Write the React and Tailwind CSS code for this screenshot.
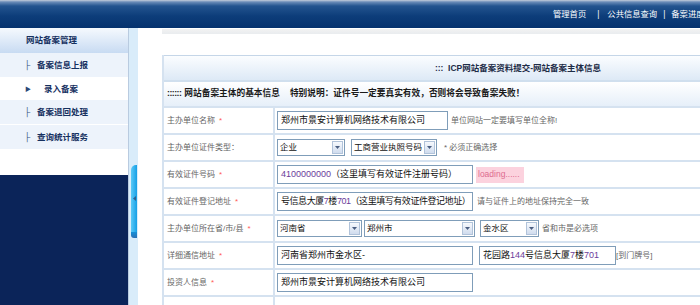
import React from "react";

function Digits({ text }) {
  const parts = text.split(/(\d+)/);
  return (
    <>
      {parts.map((p, i) =>
        /^\d+$/.test(p) ? (
          <span key={i} className="text-[#6a3d9a]">{p}</span>
        ) : (
          <span key={i}>{p}</span>
        )
      )}
    </>
  );
}

function Field({ w, text, tight }) {
  return (
    <div
      className={`${w} h-[19px] shrink-0 flex items-center border border-[#7f9db9] bg-white px-[3px] overflow-hidden whitespace-nowrap text-[9px] text-[#111] ${tight ? "tracking-[-0.45px]" : ""}`}
    >
      <span className="shrink-0">
        <Digits text={text} />
      </span>
    </div>
  );
}

function Select({ w, text }) {
  return (
    <div className={`${w} h-[17px] shrink-0 flex items-center border border-[#7f9db9] bg-white`}>
      <span className="flex-1 min-w-0 pl-[2px] text-[8.5px] text-[#111] whitespace-nowrap overflow-hidden">{text}</span>
      <span className="w-[11px] h-[13px] mr-[1px] shrink-0 flex items-center justify-center border border-[#b1c3da] bg-[linear-gradient(to_bottom,#f6f9fd,#d0dcee)]">
        <svg width="5" height="3" viewBox="0 0 5 3">
          <path d="M0 0h5L2.5 3z" fill="#4a5e82" />
        </svg>
      </span>
    </div>
  );
}

function Hint({ children, className = "" }) {
  return <span className={`text-[8px] text-[#666] whitespace-nowrap ${className}`}>{children}</span>;
}

function Row({ label, star = true, children }) {
  return (
    <div className="h-[27px] shrink-0 flex border-b-2 border-[#d5e2f0]">
      <div className="w-[111px] shrink-0 flex items-center pl-[3px] border-r-2 border-[#d5e2f0] text-[8px] text-[#666] whitespace-nowrap">
        {label}
        {star && <span className="ml-[4px] text-[#ff5a5a]">*</span>}
      </div>
      <div className="flex-1 flex items-center pl-[2px]">{children}</div>
    </div>
  );
}

function SideItem({ children, bg = "bg-[#edf3fb]" }) {
  return (
    <div className={`h-[25px] shrink-0 flex items-center pl-[24px] ${bg} border-b border-white text-[8.5px] font-bold text-[#15305f] whitespace-nowrap`}>
      <span className="font-normal text-[#34507a]">├</span>
      <span className="ml-[7px]">{children}</span>
    </div>
  );
}

export default function App() {
  return (
    <div className="w-[700px] h-[305px] overflow-hidden flex flex-col bg-white font-['Liberation_Sans','Noto_Sans_CJK_SC',sans-serif]">
      <header className="h-[28px] shrink-0 flex items-center pl-[553px] whitespace-nowrap overflow-hidden text-white text-[8.3px] bg-[linear-gradient(to_bottom,#c5cedb_0px,#6a8cb8_2px,#23548f_6px,#0d3d7a_16px,#05326e_28px)]">
        <span>管理首页</span>
        <span className="ml-[11px] mr-[8px]">|</span>
        <span>公共信息查询</span>
        <span className="ml-[6px] mr-[6px]">|</span>
        <span>备案进度查询</span>
      </header>
      <div className="flex flex-1 min-h-0">
        <aside className="w-[128px] shrink-0 flex flex-col">
          <div className="h-[25px] shrink-0 flex items-center pl-[26px] font-bold text-[8.5px] text-[#15305f] bg-[linear-gradient(to_bottom,#f5f9fe,#c8dbf2)]">
            网站备案管理
          </div>
          <SideItem>备案信息上报</SideItem>
          <div className="h-[22px] shrink-0 flex items-center pl-[25px] bg-white text-[8.5px] text-[#15305f] font-semibold whitespace-nowrap">
            <span className="text-[6px] text-[#2b4775]">▶</span>
            <span className="ml-[13px]">录入备案</span>
          </div>
          <SideItem>备案退回处理</SideItem>
          <SideItem>查询统计服务</SideItem>
          <div className="h-[25px] shrink-0 bg-white" />
          <div className="flex-1 bg-[#0b2459]" />
        </aside>
        <div className="w-[10px] shrink-0 flex flex-col border-l border-[#b9cbe0] bg-[#d9ecfa] pt-[137px] pl-[2px] pr-[1px]">
          <div className="h-[67px] rounded-tl-[5px] bg-[linear-gradient(to_right,#5ccaf7,#169fe6)] flex items-center justify-center">
            <svg width="3" height="5" viewBox="0 0 3 5">
              <path d="M3 0v5L0 2.5z" fill="#2d5f8f" />
            </svg>
          </div>
          <div className="h-[6px] bg-[linear-gradient(to_bottom,#1590d8,#2a6fb5)] rounded-bl-[3px]" />
        </div>
        <main className="flex-1 min-w-0 flex flex-col pl-[24px] overflow-hidden">
          <div className="h-[5px] mt-[1px] shrink-0 bg-[linear-gradient(to_bottom,#f2f2f2,#e9ecef)]" />
          <div className="mt-[21px] w-[710px] shrink-0 flex flex-col border-l-2 border-[#d5e2f0]">
            <div className="h-[27px] shrink-0 flex items-center justify-center border-t border-b-2 border-t-[#c5d6e8] border-b-[#d0dfee] bg-[linear-gradient(to_bottom,#fbfdff,#dde9f6)] text-[8.5px] font-bold text-[#1e2d48] whitespace-nowrap">
              :::&nbsp;&nbsp;ICP网站备案资料提交-网站备案主体信息
            </div>
            <div className="h-[26px] shrink-0 flex items-center pl-[3px] border-b-2 border-[#d5e2f0] bg-[linear-gradient(to_bottom,#ffffff,#e6eff9)] text-[8.7px] font-bold text-[#1a1a1a] whitespace-nowrap">
              <span className="tracking-[-0.5px]">::::::</span>
              <span className="ml-[3px]">网站备案主体的基本信息</span>
              <span className="ml-[10px]">特别说明：证件号一定要真实有效，否则将会导致备案失败！</span>
            </div>
            <Row label="主办单位名称">
              <Field w="w-[171px]" text="郑州市景安计算机网络技术有限公司" />
              <Hint className="ml-[3px]">单位网站一定要填写单位全称!</Hint>
            </Row>
            <Row label="主办单位证件类型：" star={false}>
              <Select w="w-[68px]" text="企业" />
              <div className="w-[6px]" />
              <Select w="w-[86px]" text="工商营业执照号码" />
              <Hint className="ml-[7px]">* 必须正确选择</Hint>
            </Row>
            <Row label="有效证件号码">
              <Field w="w-[196px]" text="4100000000（这里填写有效证件注册号码）" />
              <span className="ml-[3px] h-[16px] w-[48px] flex items-center pl-[2px] bg-[#fcd2de] text-[8.5px] text-[#dc6b8f] whitespace-nowrap">
                loading......
              </span>
            </Row>
            <Row label="有效证件登记地址">
              <Field w="w-[196px]" tight text="号信息大厦7楼701（这里填写有效证件登记地址）" />
              <Hint className="ml-[4px]">请与证件上的地址保持完全一致</Hint>
            </Row>
            <Row label="主办单位所在省/市/县">
              <Select w="w-[85px]" text="河南省" />
              <div className="w-[2px]" />
              <Select w="w-[111px]" text="郑州市" />
              <div className="w-[5px]" />
              <Select w="w-[59px]" text="金水区" />
              <Hint className="ml-[3px]">省和市是必选项</Hint>
            </Row>
            <Row label="详细通信地址">
              <Field w="w-[196px]" text="河南省郑州市金水区-" />
              <div className="w-[6px]" />
              <Field w="w-[137px]" text="花园路144号信息大厦7楼701" />
              <Hint>[到门牌号]</Hint>
            </Row>
            <Row label="投资人信息">
              <Field w="w-[196px]" text="郑州市景安计算机网络技术有限公司" />
            </Row>
            <Row label="" star={false}>
              <span />
            </Row>
          </div>
        </main>
      </div>
    </div>
  );
}
